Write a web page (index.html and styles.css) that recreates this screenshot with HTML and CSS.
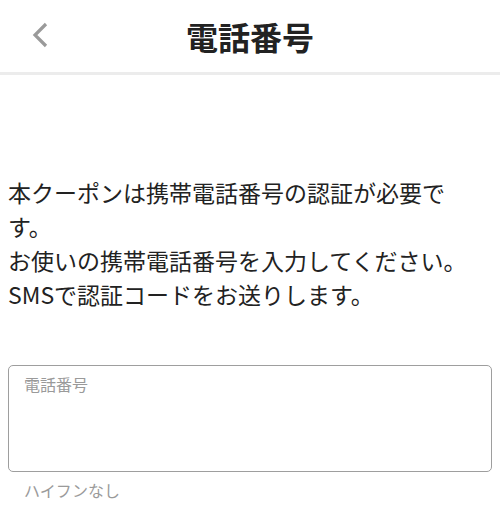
FILE: index.html
```html
<!DOCTYPE html>
<html lang="ja">
<head>
<meta charset="utf-8">
<link rel="stylesheet" href="styles.css">
</head>
<body>
<header class="header">
  <button class="back" aria-label="戻る">
    <svg width="18" height="28" viewBox="0 0 18 28"><path d="M15 3 L4 14 L15 25" fill="none" stroke="#9a9a9a" stroke-width="3.2"/></svg>
  </button>
  <h1 class="title">電話番号</h1>
</header>
<main class="content">
  <p class="lead">本クーポンは携帯電話番号の認証が必要です。<br>お使いの携帯電話番号を入力してください。<br>SMSで認証コードをお送りします。</p>
  <div class="field">
    <div class="field-label">電話番号</div>
  </div>
  <div class="hint">ハイフンなし</div>
</main>
</body>
</html>
```
FILE: styles.css
```css
* { box-sizing: border-box; }
html, body { margin: 0; padding: 0; background: #fff; }
body {
  font-family: "Noto Sans CJK JP", "Noto Sans", sans-serif;
  color: #222;
}
.header {
  position: relative;
  height: 75px;
  display: flex;
  align-items: center;
  justify-content: center;
  border-bottom: 3px solid #ececec;
}
.back {
  position: absolute;
  left: 31px;
  top: 21px;
  padding: 0;
  border: 0;
  background: none;
  display: flex;
}
.title {
  margin: 0;
  font-size: 32px;
  font-weight: 700;
  line-height: 1;
  color: #222;
  padding-top: 0;
}
.content {
  padding: 0 8px;
}
.lead {
  margin: 100px 0 0;
  font-size: 23px;
  line-height: 34px;
  width: 460px;
  color: #222;
}
.field {
  margin-top: 54px;
  height: 107px;
  border: 1.5px solid #9e9e9e;
  border-radius: 5px;
  padding: 8px 15px;
}
.field-label {
  font-size: 16px;
  line-height: 20px;
  color: #9a9a9a;
}
.hint {
  padding: 8px 16px 0;
  font-size: 16px;
  line-height: 20px;
  color: #9a9a9a;
}
```
